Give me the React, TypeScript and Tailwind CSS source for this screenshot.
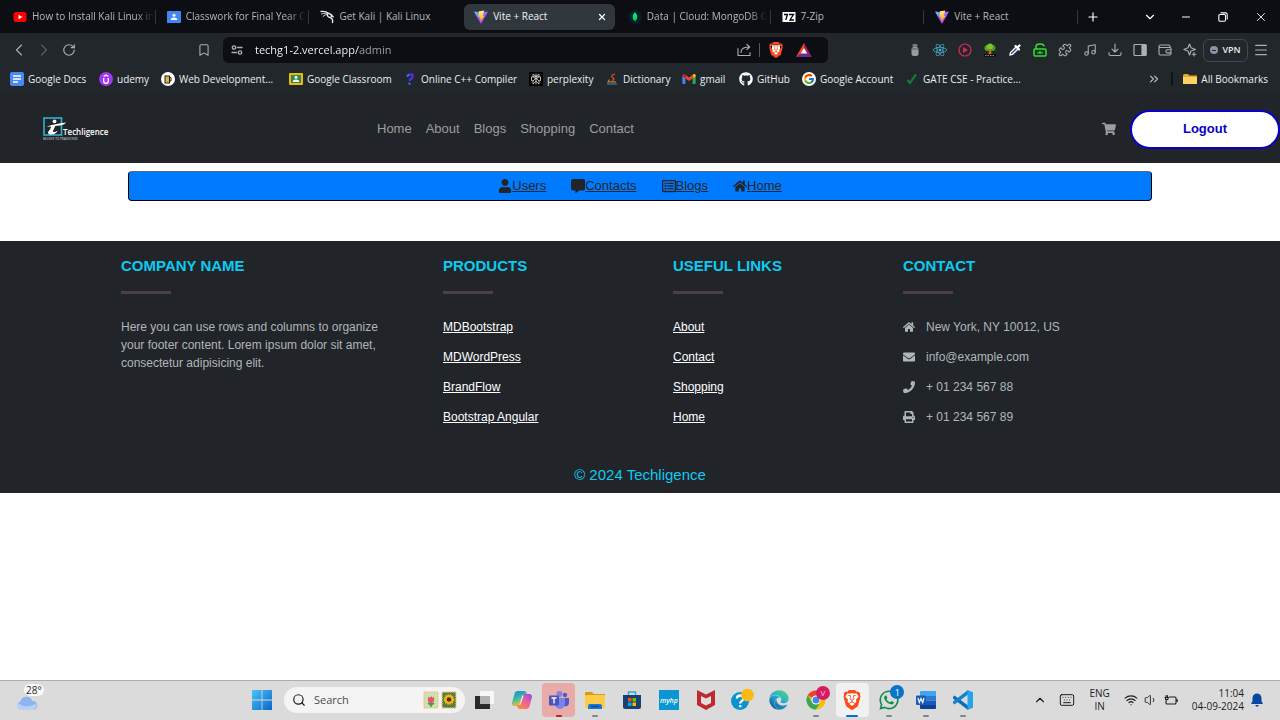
import type { ReactNode } from "react";
import {
  FaCommentAlt,
  FaEdge,
  FaEnvelope,
  FaGithub,
  FaHome,
  FaPhone,
  FaPrint,
  FaReact,
  FaRegListAlt,
  FaShoppingCart,
  FaUser,
  FaWhatsapp,
} from "react-icons/fa";
import { FcGoogle } from "react-icons/fc";
import { SiBrave, SiMongodb } from "react-icons/si";
import {
  Bookmark,
  ChevronDown,
  ChevronLeft,
  ChevronRight,
  ChevronUp,
  ChevronsRight,
  Keyboard,
  Menu,
  Minus,
  Music,
  Plus,
  Puzzle,
  RotateCw,
  Search,
  Volume1,
  Wifi,
  X,
} from "lucide-react";

/* ---------- small drawings ---------- */

function ViteIcon() {
  return (
    <svg viewBox="0 0 32 32" className="size-3.5 shrink-0">
      <defs>
        <linearGradient id="viteBody" x1="0" y1="0" x2="0.6" y2="1">
          <stop offset="0" stopColor="#41d1ff" />
          <stop offset="0.5" stopColor="#9b62ff" />
          <stop offset="1" stopColor="#bd34fe" />
        </linearGradient>
        <linearGradient id="viteBolt" x1="0" y1="0" x2="0" y2="1">
          <stop offset="0" stopColor="#ffea83" />
          <stop offset="1" stopColor="#ffa800" />
        </linearGradient>
      </defs>
      <path d="M31 5.500 17 30.300a1.200 1.200 0 0 1-2 0L1 5.500C.4 4.500 1.200 3.400 2.300 3.600L16 6l13.600-2.400c1.200-.2 2 1 1.400 1.900Z" fill="url(#viteBody)" />
      <path d="M23.500 1 11 3l-1 13 4-.7-1 5.500 2.500-.8-1.500 7.500L24 13l-4 .6L23.500 1Z" fill="url(#viteBolt)" />
    </svg>
  );
}

function YoutubeIcon() {
  return (
    <svg viewBox="0 0 26 20" className="h-2.5 w-3.5 shrink-0">
      <rect width="26" height="20" rx="5" fill="#f00" />
      <path d="m10 5.500 8 4.500-8 4.500Z" fill="#fff" />
    </svg>
  );
}

function KaliIcon() {
  return (
    <svg viewBox="0 0 28 28" className="size-3.5 shrink-0" fill="none" stroke="#e8e8e8" strokeLinecap="round">
      <path d="M2 3c6-1 12 1 16 4 4 1 6 3 8 6l-4-1" strokeWidth="2.600" />
      <path d="M3 8c5-2 9-2 13 0M6 13c3-3 6-4 9-4" strokeWidth="1.800" />
      <path d="M15 8c-1 4 1 6 5 7s6 4 5 10" strokeWidth="2.800" />
    </svg>
  );
}

function ClassroomIcon({ green = false }: { green?: boolean }) {
  return (
    <svg viewBox="0 0 28 24" className="h-3 w-3.5 shrink-0">
      <rect width="28" height="24" rx="2" fill={green ? "#f0b90b" : "#4285f4"} />
      {green && <rect x="4" y="4" width="20" height="16" fill="#2e8b4d" />}
      <circle cx="14" cy="8.500" r="3" fill="#fff" />
      <path d="M7.500 18c0-3.500 3-5 6.500-5s6.500 1.500 6.500 5Z" fill="#fff" />
    </svg>
  );
}

function SevenZipIcon() {
  return (
    <svg viewBox="0 0 26 20" className="h-2.5 w-3.5 shrink-0">
      <rect width="26" height="20" fill="#fff" />
      <path d="M3 5h7l-3.500 11M13 5h9l-7 11h8" fill="none" stroke="#000" strokeWidth="2.600" />
    </svg>
  );
}

function BraveIcon({ large = false }: { large?: boolean }) {
  return (
    <span className={large ? "grid size-5 place-items-center" : "grid size-4 place-items-center"}>
      <svg viewBox="0 0 24 24" className="size-full">
        <path d="M6 5h12v9l-6 7-6-7Z" fill="#fff" />
        <SiBrave color="#fb4a1c" size={24} />
      </svg>
    </span>
  );
}

function GmailIcon() {
  return (
    <svg viewBox="0 0 24 18" className="h-2.5 w-3.5">
      <path d="M0 2.500V16a2 2 0 0 0 2 2h3.500V7Z" fill="#4285f4" />
      <path d="M18.500 18H22a2 2 0 0 0 2-2V2.500L18.500 7Z" fill="#34a853" />
      <path d="M18.500 1.500V8L24 4V2.300C24 .2 21.500-.8 20 .3Z" fill="#fbbc04" />
      <path d="M5.500 8V1.500L12 6.300l6.500-4.800V8L12 12.800Z" fill="#ea4335" />
      <path d="M0 2.300V4l5.500 4V1.500L4 .3C2.500-.8 0 .2 0 2.300Z" fill="#c5221f" />
    </svg>
  );
}

function ChromeLogo() {
  return (
    <svg viewBox="0 0 40 40" className="size-5">
      <circle cx="20" cy="20" r="19" fill="#fbbc04" />
      <path d="M20 20 3.500 10.500A19 19 0 0 1 36.500 11L20 11Z" fill="#ea4335" />
      <path d="M3.500 10.500A19 19 0 0 0 20 39l8-14.500H12Z" fill="#34a853" />
      <circle cx="20" cy="20" r="9" fill="#fff" />
      <circle cx="20" cy="20" r="7" fill="#4285f4" />
    </svg>
  );
}

const stroke = { fill: "none", stroke: "currentColor", strokeLinecap: "round", strokeLinejoin: "round" } as const;

/* ---------- browser chrome ---------- */

type Tab = { title: string; icon: ReactNode; active?: boolean; divider?: boolean; fade?: boolean };

const tabs: Tab[] = [
  { title: "How to Install Kali Linux in", icon: <YoutubeIcon />, divider: true, fade: true },
  { title: "Classwork for Final Year C", icon: <ClassroomIcon />, divider: true, fade: true },
  { title: "Get Kali | Kali Linux", icon: <KaliIcon /> },
  { title: "Vite + React", icon: <ViteIcon />, active: true },
  {
    title: "Data | Cloud: MongoDB C",
    icon: (
      <span className="grid size-3.5 shrink-0 place-items-center rounded-full bg-[#001e2b]">
        <SiMongodb className="size-2.5 text-[#00ed64]" />
      </span>
    ),
    divider: true,
    fade: true,
  },
  { title: "7-Zip", icon: <SevenZipIcon />, divider: true },
  { title: "Vite + React", icon: <ViteIcon />, divider: true },
];

function tabTitle(tab: Tab) {
  if (tab.active) return "text-[10px] whitespace-nowrap text-[#f1f2f3]";
  if (tab.fade) return "mask-r-from-85% text-[10px] whitespace-nowrap text-[#b5b7ba]";
  return "text-[10px] whitespace-nowrap text-[#b5b7ba]";
}

function TabStrip() {
  return (
    <div className="flex h-[33px] items-center bg-[#0d0e13] text-white">
      <div role="tablist" className="grid max-w-[1079px] flex-1 grid-cols-7 pl-[3px]">
        {tabs.map((tab, i) => (
          <div key={i} className="flex min-w-0 items-center">
            <div
              className={
                tab.active
                  ? "flex h-[26px] min-w-0 flex-1 items-center rounded-md bg-[#30383e] pr-2 pl-2.5"
                  : "flex h-[26px] min-w-0 flex-1 items-center pl-2.5"
              }
            >
              <button
                role="tab"
                aria-selected={!!tab.active}
                className="flex min-w-0 flex-1 items-center gap-[5px] text-left"
              >
                {tab.icon}
                <span className={tabTitle(tab)}>{tab.title}</span>
              </button>
              {tab.active && (
                <button aria-label="Close tab">
                  <X className="size-2.5" strokeWidth={3} />
                </button>
              )}
            </div>
            <span className={tab.divider ? "mx-px h-3.5 w-px bg-[#34373d]" : "mx-px h-3.5 w-px"} />
          </div>
        ))}
      </div>
      <button aria-label="New tab" className="grid w-7 place-items-center">
        <Plus className="size-3.5" />
      </button>
      <div className="ml-auto flex items-center">
        <button aria-label="Search tabs" className="grid w-[34px] place-items-center">
          <ChevronDown className="size-3.5" />
        </button>
        <button aria-label="Minimize" className="grid w-[37px] place-items-center">
          <Minus className="size-3" />
        </button>
        <button aria-label="Restore" className="grid w-[38px] place-items-center">
          <svg viewBox="0 0 12 12" className="size-2.5" {...stroke} strokeWidth="1.300">
            <rect x="1" y="3" width="8" height="8" rx="1.500" />
            <path d="M3.500 1H9a2 2 0 0 1 2 2v5.500" />
          </svg>
        </button>
        <button aria-label="Close window" className="grid w-[38px] place-items-center">
          <X className="size-3.5" strokeWidth={1.500} />
        </button>
      </div>
    </div>
  );
}

const extensions: { name: string; icon: ReactNode }[] = [
  {
    name: "Bottle",
    icon: (
      <svg viewBox="0 0 12 14" className="h-3.5 w-3">
        <rect x="3.500" y="1" width="5" height="3" rx="1" fill="#777" />
        <rect x="2.500" y="4" width="7" height="9" rx="2.500" fill="#9c9c9c" />
        <path d="M2.500 6h7" stroke="#555" />
      </svg>
    ),
  },
  { name: "React Developer Tools", icon: <FaReact className="size-3.5 text-[#4cb8d8]" /> },
  {
    name: "Video",
    icon: (
      <svg viewBox="0 0 14 14" className="size-3.5">
        <circle cx="7" cy="7" r="6" fill="none" stroke="#d42a5b" strokeWidth="1.200" />
        <path d="m5 4 5 3-5 3Z" fill="#d42a5b" />
      </svg>
    ),
  },
  {
    name: "Tree",
    icon: (
      <svg viewBox="0 0 14 14" className="size-3.5">
        <circle cx="4.500" cy="5" r="3" fill="#5aa51e" />
        <circle cx="9.500" cy="5" r="3" fill="#4e9a1a" />
        <circle cx="7" cy="3.500" r="3" fill="#7cc62b" />
        <path d="M6 6h2l.5 5h-3Z" fill="#b5702b" />
        <path d="M1 12.500h12" stroke="#000" strokeWidth="2" />
        <path d="M2 12.500h10" stroke="#a88" strokeWidth="1" strokeDasharray="1.500 1" />
      </svg>
    ),
  },
  {
    name: "Color picker",
    icon: (
      <svg viewBox="0 0 14 14" className="size-3.5">
        <path d="m2 12 .5-2.500 6-6 2 2-6 6Z" fill="#3b4fa0" stroke="#fff" strokeWidth="1.300" />
        <path d="m7.500 3 3.500 3.500M9.500 4.500l2-2" stroke="#fff" strokeWidth="2.200" strokeLinecap="round" />
      </svg>
    ),
  },
  {
    name: "Unlock",
    icon: (
      <svg viewBox="0 0 14 14" className="size-3.5" fill="none" stroke="#2be52b" strokeWidth="1.500">
        <rect x="1" y="6" width="12" height="7" rx="1" />
        <path d="M3 6V3.500C3 1.500 4.500 1 7 1s4 .5 4 2.500M5 9v1.500M9 9v1.500M7 8v3" />
      </svg>
    ),
  },
  { name: "Extensions", icon: <Puzzle className="size-3.5" strokeWidth={1.800} /> },
  { name: "Media", icon: <Music className="size-3.5" strokeWidth={1.800} /> },
  {
    name: "Downloads",
    icon: (
      <svg viewBox="0 0 14 14" className="size-3.5" {...stroke} strokeWidth="1.100">
        <path d="M7 1v8M4 6.200 7 9l3-2.800M1 9.500V11c0 1 .5 1.500 1.500 1.500h9c1 0 1.500-.5 1.500-1.500V9.500" />
      </svg>
    ),
  },
  {
    name: "Sidebar",
    icon: (
      <svg viewBox="0 0 14 14" className="size-3.5" {...stroke} strokeWidth="1.200">
        <rect x="1" y="1.500" width="12" height="11" rx="1" />
        <rect x="9" y="2" width="4" height="10" fill="currentColor" />
      </svg>
    ),
  },
  {
    name: "Wallet",
    icon: (
      <svg viewBox="0 0 14 14" className="size-3.5" {...stroke} strokeWidth="1.100">
        <path d="M12 4.500V3.500A1.500 1.500 0 0 0 10.500 2h-8A1.500 1.500 0 0 0 1 3.500v7A1.500 1.500 0 0 0 2.500 12h9a1.500 1.500 0 0 0 1.500-1.500V5.500a1 1 0 0 0-1-1H1M13 6.700H9.500a1.600 1.600 0 0 0 0 3.200H13" />
      </svg>
    ),
  },
  {
    name: "Leo AI",
    icon: (
      <svg viewBox="0 0 14 14" className="size-3.5" {...stroke} strokeWidth="1.100">
        <path d="M6.500 1 8 4.800 12.500 6.500 8 8 6.500 12 5 8 .8 6.500 5 4.800ZM11 9.500v3.500M9.200 11.200h3.600" />
      </svg>
    ),
  },
];

function Toolbar() {
  return (
    <div className="flex h-[34px] items-center text-[#a9b0b6]">
      <nav aria-label="History" className="flex items-center pl-1.5">
        <button aria-label="Back" className="grid w-[25px] place-items-center">
          <ChevronLeft className="size-5" strokeWidth={1.300} />
        </button>
        <button aria-label="Forward" className="grid w-[25px] place-items-center text-[#5c6267]">
          <ChevronRight className="size-5" strokeWidth={1.300} />
        </button>
        <button aria-label="Reload" className="grid w-[25px] place-items-center">
          <RotateCw className="size-3.5" strokeWidth={2} />
        </button>
      </nav>
      <button aria-label="Bookmark this page" className="ml-[116px] grid w-3.5 place-items-center">
        <Bookmark className="size-3.5" strokeWidth={1.800} />
      </button>
      <div className="ml-3 flex h-[26px] max-w-[605px] flex-1 items-center rounded-md bg-[#0d0e13] pl-2">
        <svg viewBox="0 0 12 12" className="mr-1.5 size-3 shrink-0" {...stroke} strokeWidth="1.300">
          <circle cx="3" cy="3.500" r="1.700" />
          <circle cx="9" cy="8.500" r="1.700" />
          <path d="M6.500 3.500H11M1 8.500h4.500" />
        </svg>
        <input
          aria-label="Address"
          defaultValue="techg1-2.vercel.app/admin"
          className="ml-1.5 min-w-0 flex-1 bg-linear-to-r from-white from-[104px] to-[#a4a6a9] to-[104px] bg-clip-text text-[11px] text-transparent caret-white outline-none"
        />
        <button aria-label="Share" className="px-2">
          <svg viewBox="0 0 14 14" className="size-3.5" {...stroke} strokeWidth="1.100">
            <path d="M1 5.500V12.500h12V9.500M4 9.500c0-4 3-5.500 8.500-5.500M9.800 1.300 12.700 4 9.800 6.700" />
          </svg>
        </button>
        <span className="h-3.5 w-px bg-[#55585d]" />
        <button aria-label="Brave Shields" className="ml-2">
          <BraveIcon />
        </button>
        <button aria-label="Brave Rewards" className="mr-4 ml-3">
          <svg viewBox="0 0 16 14" className="h-3.5 w-4">
            <path d="M8 0 0 14l8-5Z" fill="#ff4724" />
            <path d="m8 0 8 14-8-5Z" fill="#9e1f63" />
            <path d="M0 14h16L8 8Z" fill="#662d91" />
            <path d="m8 5 3.200 5.500H4.800Z" fill="#fff" />
          </svg>
        </button>
      </div>
      <div className="ml-auto flex items-center pr-[11px]">
        {extensions.map((item) => (
          <button key={item.name} aria-label={item.name} className="grid w-[25px] place-items-center">
            {item.icon}
          </button>
        ))}
        <button className="mx-px flex h-[23px] w-[45px] items-center justify-center gap-1 rounded-md border border-[#42484d] text-[9px] font-semibold text-[#e8eaec]">
          <span className="grid size-2 place-items-center rounded-full bg-[#8e92a4]">
            <span className="h-px w-1 bg-[#22272b]" />
          </span>
          VPN
        </button>
        <button aria-label="Menu" className="ml-1">
          <Menu className="size-4" strokeWidth={1.800} />
        </button>
      </div>
    </div>
  );
}

const bookmarks: { label: string; width: string; icon: ReactNode }[] = [
  {
    label: "Google Docs",
    width: "w-[89px]",
    icon: (
      <svg viewBox="0 0 14 14" className="size-3.5">
        <rect width="14" height="14" rx="2" fill="#4a8af4" />
        <path d="M3 4h8M3 7h8M3 10h5" stroke="#fff" strokeWidth="1.300" />
      </svg>
    ),
  },
  {
    label: "udemy",
    width: "w-[62px]",
    icon: (
      <svg viewBox="0 0 14 14" className="size-3.5">
        <circle cx="7" cy="7" r="7" fill="#a435f0" />
        <path d="M4.700 6v3c0 3 4.600 3 4.600 0V6M4.700 4.500 7 3l2.300 1.500" stroke="#fff" strokeWidth="1.300" fill="none" />
      </svg>
    ),
  },
  {
    label: "Web Development...",
    width: "w-[128px]",
    icon: (
      <svg viewBox="0 0 14 14" className="size-3.5">
        <circle cx="7" cy="7" r="7" fill="#fff" />
        <rect x="4" y="4" width="4.500" height="7" fill="#e8b330" stroke="#222" />
        <path d="M8.500 5.500h1.500v3.500H8.500" stroke="#222" fill="none" />
      </svg>
    ),
  },
  { label: "Google Classroom", width: "w-[114px]", icon: <ClassroomIcon green /> },
  {
    label: "Online C++ Compiler",
    width: "w-[126px]",
    icon: (
      <svg viewBox="0 0 14 14" className="size-3.5">
        <path d="M4 4.500 6 2.500h3.500v3L7 7.500v1.500" fill="none" stroke="#5b2bea" strokeWidth="2.200" />
        <path d="M4 4.500 6 2.500" stroke="#1c7bff" strokeWidth="2" />
        <path d="m5.500 11 2 1.500" stroke="#2f6bff" strokeWidth="2" />
      </svg>
    ),
  },
  {
    label: "perplexity",
    width: "w-[76px]",
    icon: (
      <svg viewBox="0 0 14 14" className="size-3.5" fill="none" stroke="#e6e6e6" strokeWidth="0.800">
        <rect width="14" height="14" fill="#000" stroke="none" />
        <path d="M7 1.500v11M4 2v2.500L7 7l3-2.500V2L7 4.500ZM2.500 4.800h9v4H10L7 6.500 4 8.800H2.500ZM4 8.800V12l3-2.800L10 12V8.800" />
      </svg>
    ),
  },
  {
    label: "Dictionary",
    width: "w-[77px]",
    icon: (
      <svg viewBox="0 0 14 14" className="size-3.5" fill="none" strokeWidth="1.200">
        <path d="M10 2C6.500 3 5.500 4.500 8 6c1.500 1 1 2-1 2.500" stroke="#e2572b" />
        <path d="M4.500 7.500 3 9.800h8" stroke="#c77a3a" />
        <path d="M2 12h10" stroke="#3b86a5" />
      </svg>
    ),
  },
  { label: "gmail", width: "w-[57px]", icon: <GmailIcon /> },
  { label: "GitHub", width: "w-[63px]", icon: <FaGithub className="size-3.5 text-white" /> },
  {
    label: "Google Account",
    width: "w-[103px]",
    icon: (
      <span className="grid size-3.5 place-items-center rounded-full bg-white">
        <FcGoogle className="size-3" />
      </span>
    ),
  },
  {
    label: "GATE CSE - Practice...",
    width: "w-[114px]",
    icon: (
      <svg viewBox="0 0 14 14" className="size-3.5">
        <path d="M2.500 8 5 11 11 2.500" fill="none" stroke="#0b7a3b" strokeWidth="2.200" />
      </svg>
    ),
  },
];

function BookmarksBar() {
  return (
    <nav aria-label="Bookmarks" className="flex h-[26px] items-center pr-3 pb-0.5 pl-2.5 text-[10px] text-[#eceef0]">
      {bookmarks.map((item) => (
        <a key={item.label} href="#" className={`flex items-center gap-1 whitespace-nowrap ${item.width}`}>
          <span className="shrink-0">{item.icon}</span>
          {item.label}
        </a>
      ))}
      <div className="ml-auto flex items-center">
        <button aria-label="More bookmarks" className="text-[#b9bec3]">
          <ChevronsRight className="size-3.5" />
        </button>
        <span className="mx-2.5 h-3.5 w-0.5 bg-[#101317]" />
        <a href="#" className="flex items-center gap-1 whitespace-nowrap">
          <svg viewBox="0 0 14 12" className="h-3 w-3.5">
            <path d="M0 2.500A1.500 1.500 0 0 1 1.500 1H5l1.500 1.500H14V11H0Z" fill="#e0a92a" />
            <path d="M0 4h14v7H0Z" fill="#fdd262" />
          </svg>
          All Bookmarks
        </a>
      </div>
    </nav>
  );
}

/* ---------- web page ---------- */

function Logo() {
  return (
    <svg viewBox="0 0 68 24" className="h-6 w-[68px]" aria-label="Techligence">
      <rect x="1" y="1" width="17.500" height="17" fill="none" stroke="#2bb5cf" strokeWidth="1.600" />
      <circle cx="11.500" cy="4.300" r="1.900" fill="#fff" />
      <path d="M3.500 9.800C9 7.500 15 6.500 23 5.500 21 8.300 16 8.600 12.300 9L10 14c-.5 1.500 2 1.500 4.500-.2-1 3-4.500 4.200-7.500 3.600-3-.8-2-3 0-5l1.200-2.900Z" fill="#fff" />
      <text x="20" y="18" fill="#fff" fontFamily="'Open Sans', sans-serif" fontSize="8" fontWeight="600">
        Techligence
      </text>
      <text x="0" y="23" fill="#b5b7b9" fontFamily="'Open Sans', sans-serif" fontSize="3" fontWeight="600">
        BELIEVE TO TRANSCEND
      </text>
    </svg>
  );
}

function Navbar() {
  return (
    <header className="flex h-[70px] items-center bg-[#212529] pt-0.5">
      <a href="#" className="ml-[43px]">
        <Logo />
      </a>
      <nav className="ml-[266px] flex gap-3.5 text-[13px] text-[#9b9d9f]">
        {["Home", "About", "Blogs", "Shopping", "Contact"].map((label) => (
          <a key={label} href="#">
            {label}
          </a>
        ))}
      </nav>
      <a href="#" aria-label="Cart" className="mr-3.5 ml-auto text-[#9b9d9f]">
        <FaShoppingCart className="size-3.5" />
      </a>
      <button className="h-[39px] w-[150px] rounded-full border-2 border-[#0b00c8] bg-white text-[13px] font-bold text-[#0b00c8]">
        Logout
      </button>
    </header>
  );
}

const adminLinks = [
  { label: "Users", Icon: FaUser },
  { label: "Contacts", Icon: FaCommentAlt },
  { label: "Blogs", Icon: FaRegListAlt },
  { label: "Home", Icon: FaHome },
];

function AdminBar() {
  return (
    <nav className="mx-auto mt-2 mb-10 flex h-[30px] w-4/5 items-center justify-center gap-[25px] rounded border border-t-[#4a6d94] border-r-black border-b-black border-l-black bg-[#007bff] text-[13px] text-[#212529]">
      {adminLinks.map(({ label, Icon }) => (
        <a key={label} href="#" className="flex items-center">
          <Icon className="size-3.5" />
          <span className="underline">{label}</span>
        </a>
      ))}
    </nav>
  );
}

function FooterColumn({ title, children }: { title: string; children: ReactNode }) {
  return (
    <section>
      <h2 className="text-[15px] leading-[18px] font-bold text-[#0dcaf0] uppercase">{title}</h2>
      <hr className="mt-4 mb-6 h-[3px] w-[50px] border-0 bg-[#4f3f44]" />
      {children}
    </section>
  );
}

function LinkList({ items }: { items: string[] }) {
  return (
    <ul className="flex flex-col gap-3 text-white">
      {items.map((item) => (
        <li key={item}>
          <a href="#" className="underline">
            {item}
          </a>
        </li>
      ))}
    </ul>
  );
}

const contacts = [
  { text: "New York, NY 10012, US", Icon: FaHome },
  { text: "info@example.com", Icon: FaEnvelope },
  { text: "+ 01 234 567 88", Icon: FaPhone },
  { text: "+ 01 234 567 89", Icon: FaPrint },
];

function Footer() {
  return (
    <footer className="bg-[#212529] pt-4 pb-2">
      <div className="mx-auto grid w-fit grid-cols-[322px_230px_230px_256px] text-[12px] leading-[18px] text-[#b0b5ba]">
        <FooterColumn title="Company name">
          <p className="max-w-[270px]">
            Here you can use rows and columns to organize your footer content. Lorem ipsum dolor sit amet, consectetur
            adipisicing elit.
          </p>
        </FooterColumn>
        <FooterColumn title="Products">
          <LinkList items={["MDBootstrap", "MDWordPress", "BrandFlow", "Bootstrap Angular"]} />
        </FooterColumn>
        <FooterColumn title="Useful links">
          <LinkList items={["About", "Contact", "Shopping", "Home"]} />
        </FooterColumn>
        <FooterColumn title="Contact">
          <ul className="flex flex-col gap-3">
            {contacts.map(({ text, Icon }) => (
              <li key={text} className="flex items-center gap-[11px]">
                <Icon className="size-3" />
                {text}
              </li>
            ))}
          </ul>
        </FooterColumn>
      </div>
      <p className="mt-[39px] text-center text-[15px] leading-5 text-[#0dcaf0]">© 2024 Techligence</p>
    </footer>
  );
}

/* ---------- desktop taskbar ---------- */

type TaskApp = { name: string; icon: ReactNode; running?: boolean; tile?: "red" | "light" };

const apps: TaskApp[] = [
  {
    name: "Task view",
    icon: (
      <svg viewBox="0 0 20 20" className="size-5">
        <rect x="5" y="1" width="14" height="13" rx="1" fill="#f7f7f7" />
        <path d="M0 6h5v8h10v5H0Z" fill="#2b2b2b" />
        <rect x="5" y="6" width="10" height="8" fill="#b3b3b3" />
      </svg>
    ),
  },
  {
    name: "Copilot",
    icon: (
      <svg viewBox="0 0 20 20" className="size-5">
        <defs>
          <linearGradient id="copA" x1="0" y1="0" x2="0.4" y2="1">
            <stop offset="0" stopColor="#1b7fe0" />
            <stop offset="0.5" stopColor="#33b8b0" />
            <stop offset="1" stopColor="#f2c32c" />
          </linearGradient>
          <linearGradient id="copB" x1="1" y1="0" x2="0.3" y2="1">
            <stop offset="0" stopColor="#8a4be8" />
            <stop offset="0.5" stopColor="#ee5c9c" />
            <stop offset="1" stopColor="#f58a4a" />
          </linearGradient>
        </defs>
        <path d="M6 1h6c2 0 2.500 1.500 3 4h-3L9 14c-.5 1.500-1 2-2.500 2H3c-3 0-3.500-2-2.500-5L2.500 4C3 2 4 1 6 1Z" fill="url(#copA)" />
        <path d="M14 19H8c-2 0-2.500-1.500-3-4h3l3-9c.5-1.500 1-2 2.500-2H17c3 0 3.500 2 2.500 5l-2 7c-.5 2-1.500 3-3.500 3Z" fill="url(#copB)" />
        <path d="m11.500 6-3 8.500h-1L10.500 5Z" fill="#eef3fb" />
      </svg>
    ),
  },
  {
    name: "Teams",
    running: true,
    tile: "red",
    icon: (
      <svg viewBox="0 0 20 20" className="size-5">
        <circle cx="16" cy="5" r="2.200" fill="#5059c9" />
        <path d="M13 8h7v5a3.500 3.500 0 0 1-5 3Z" fill="#5059c9" />
        <circle cx="10.500" cy="4" r="3" fill="#7b83eb" />
        <path d="M6 8h10v6a5 5 0 0 1-10 0Z" fill="#7b83eb" />
        <rect y="5.500" width="10" height="10" rx="1" fill="#4b53bc" />
        <path d="M2.500 8h5M5 8v5.500" stroke="#fff" strokeWidth="1.400" />
      </svg>
    ),
  },
  {
    name: "File Explorer",
    running: true,
    icon: (
      <svg viewBox="0 0 20 20" className="size-5">
        <path d="M0 3a1 1 0 0 1 1-1h6l2 2h10a1 1 0 0 1 1 1v4H0Z" fill="#d99a1c" />
        <rect y="5" width="20" height="13" rx="1" fill="#fccb47" />
        <path d="M3 19v-3a2 2 0 0 1 2-2h10a2 2 0 0 1 2 2v3Z" fill="#1976d2" />
        <path d="M6 16.500h8" stroke="#0b4a94" strokeWidth="1.500" />
      </svg>
    ),
  },
  {
    name: "Microsoft Store",
    icon: (
      <svg viewBox="0 0 20 20" className="size-5">
        <path d="M6.500 5V2h7v3" fill="none" stroke="#39a3dc" strokeWidth="1.500" />
        <path d="M1 5h18v12a2 2 0 0 1-2 2H3a2 2 0 0 1-2-2Z" fill="#17416f" />
        <path d="M6 8h3.500v3.500H6Z" fill="#f25022" />
        <path d="M10.500 8H14v3.500h-3.500Z" fill="#7fba00" />
        <path d="M6 12.500h3.500V16H6Z" fill="#00a4ef" />
        <path d="M10.500 12.500H14V16h-3.500Z" fill="#ffb900" />
      </svg>
    ),
  },
  {
    name: "myHP",
    icon: (
      <span className="grid size-5 place-items-center bg-[#0a96d1] text-[7px] leading-none font-semibold text-white italic">
        myhp
      </span>
    ),
  },
  {
    name: "McAfee",
    icon: (
      <svg viewBox="0 0 20 20" className="size-5">
        <path d="M1 0 10 4.500 19 0v15l-9 5-9-5Z" fill="#bf2a30" />
        <path d="m5 6 5 2.500L15 6v7l-5 2.500L5 13Z" fill="#dedede" />
      </svg>
    ),
  },
  {
    name: "Get Help",
    icon: (
      <svg viewBox="0 0 24 22" className="h-[22px] w-6">
        <circle cx="10" cy="12" r="9" fill="#0a93cf" />
        <path d="M7 9.500c0-4 6.500-4 6.500 0 0 2.500-3.300 2.300-3.300 5M10.200 16v2.300" fill="none" stroke="#fff" strokeWidth="2.400" />
        <circle cx="17.500" cy="6" r="6.300" fill="#fdb913" />
      </svg>
    ),
  },
  {
    name: "Edge",
    icon: (
      <svg viewBox="0 0 20 20" className="size-5">
        <defs>
          <linearGradient id="edge" x1="0.900" y1="0" x2="0.200" y2="1">
            <stop offset="0" stopColor="#5bd75a" />
            <stop offset="0.400" stopColor="#2bb6cf" />
            <stop offset="1" stopColor="#0c59a4" />
          </linearGradient>
        </defs>
        <FaEdge size={20} fill="url(#edge)" />
      </svg>
    ),
  },
  {
    name: "Chrome",
    running: true,
    icon: (
      <span className="relative">
        <ChromeLogo />
        <span className="absolute -top-1 -right-1 grid size-3.5 place-items-center rounded-full bg-[#d81b60] text-[8px] leading-none text-[#f6c5d8]">
          V
        </span>
      </span>
    ),
  },
  { name: "Brave", running: true, tile: "light", icon: <BraveIcon large /> },
  {
    name: "WhatsApp",
    running: true,
    icon: (
      <span className="relative">
        <FaWhatsapp className="size-[22px] text-[#128c4a]" />
        <span className="absolute -top-1 -right-1 grid size-3.5 place-items-center rounded-full bg-[#0a74c9] text-[9px] leading-none text-white">
          1
        </span>
      </span>
    ),
  },
  {
    name: "Word",
    running: true,
    icon: (
      <svg viewBox="0 0 20 20" className="size-5">
        <path d="M5 1h14a1 1 0 0 1 1 1v4H4V2a1 1 0 0 1 1-1Z" fill="#41a5ee" />
        <path d="M4 6h16v4.500H4Z" fill="#2b7cd3" />
        <path d="M4 10.500h16V15H4Z" fill="#185abd" />
        <path d="M4 15h16v3a1 1 0 0 1-1 1H5a1 1 0 0 1-1-1Z" fill="#103f91" />
        <rect y="5.500" width="10" height="9.500" rx="1" fill="#185abd" />
        <path d="m2 8 1.300 4.500L5 8.500l1.700 4L8 8" fill="none" stroke="#fff" strokeWidth="1.200" />
      </svg>
    ),
  },
  {
    name: "Visual Studio Code",
    running: true,
    icon: (
      <svg viewBox="0 0 20 20" className="size-5">
        <path d="m0 7 1.500-1.500L15 15.500V20L0 8.500Z" fill="#0b6db5" />
        <path d="m0 13 1.500 1.500L15 4.500V0L0 11.500Z" fill="#1582cc" />
        <path d="m14.500 0 5.500 2.300v15.400L14.500 20Z" fill="#25a3ee" />
      </svg>
    ),
  },
];

function runningMark(app: TaskApp) {
  if (!app.running) return "h-0.5 w-1.5";
  if (app.tile === "red") return "h-0.5 w-1.5 rounded-full bg-[#b3261e]";
  if (app.tile === "light") return "h-0.5 w-3 rounded-full bg-[#0a6cc4]";
  return "h-0.5 w-1.5 rounded-full bg-[#858585]";
}

function appTile(app: TaskApp) {
  const base = "flex h-[34px] w-[33px] flex-col items-center justify-end gap-0.5";
  if (app.tile === "red") return `${base} rounded bg-[#e9aba7]`;
  if (app.tile === "light") return `${base} rounded bg-[#f1f1f1]`;
  return base;
}

function Taskbar() {
  return (
    <div className="flex h-10 items-center border-t border-[#adadad] bg-[#dbdbdb] pb-px text-[10px] text-[#1d1d1d]">
      <button aria-label="Weather" className="relative ml-4 h-7 w-8">
        <svg viewBox="0 0 24 20" className="mt-1 h-[18px] w-[22px]">
          <path d="M5 19a5 5 0 0 1-.5-9.500A7 7 0 0 1 18 9a5 5 0 0 1 1 10Z" fill="#8fb5ee" />
          <path d="M5 19a5 5 0 0 1-3-8c6 5 13 5 20 1a5 5 0 0 1-3 7Z" fill="#b9d0f6" />
        </svg>
        <span className="absolute -top-0.5 left-2 rounded-full bg-[#fafafa] px-0.5 text-[10px] leading-3">28°</span>
      </button>
      <button aria-label="Start" className="ml-[204px]">
        <svg viewBox="0 0 20 20" className="size-5">
          <defs>
            <linearGradient id="start" x1="0" y1="0" x2="1" y2="1">
              <stop offset="0" stopColor="#4cc3f5" />
              <stop offset="1" stopColor="#0a66c8" />
            </linearGradient>
          </defs>
          <path d="M0 0h9.600v9.600H0ZM10.400 0H20v9.600h-9.600ZM0 10.400h9.600V20H0ZM10.400 10.400H20V20h-9.600Z" fill="url(#start)" />
        </svg>
      </button>
      <label className="ml-3 flex h-[26px] w-[181px] items-center rounded-full bg-[#f4f4f4] px-2">
        <Search className="size-3.5 shrink-0" />
        <input
          aria-label="Search"
          placeholder="Search"
          className="ml-2 w-full min-w-0 bg-transparent text-[11px] outline-none placeholder:text-[#4c4c4c]"
        />
        <svg viewBox="0 0 34 18" className="h-[18px] w-[34px] shrink-0">
          <rect x="1" y="1" width="14" height="16" fill="#cfe0b0" stroke="#eac48a" strokeWidth="1.500" strokeDasharray="1.500 1" />
          <path d="M8 10v6M8 14l-3-2M8 14l3-2" stroke="#4f9a3d" strokeWidth="1.600" />
          <path d="M5 5.500 6.500 7 8 5l1.500 2L11 5.500V9a3 3 0 0 1-6 0Z" fill="#e8506f" />
          <rect x="19" y="1" width="14" height="16" fill="#55803a" stroke="#eac48a" strokeWidth="1.500" strokeDasharray="1.500 1" />
          <circle cx="26" cy="8.500" r="4.300" fill="#f7b51b" stroke="#f7b51b" strokeWidth="2" strokeDasharray="1.500 0.800" />
          <circle cx="26" cy="8.500" r="2.300" fill="#5a2a0c" />
        </svg>
      </label>
      <div className="ml-0.5 grid w-[514px] grid-cols-14">
        {apps.map((app) => (
          <button key={app.name} aria-label={app.name} className="flex justify-center">
            <span className={appTile(app)}>
              <span className="grid flex-1 place-items-center pt-1">{app.icon}</span>
              <span className={runningMark(app)} />
            </span>
          </button>
        ))}
      </div>
      <div className="mr-4 ml-auto flex items-center">
        <button aria-label="Show hidden icons">
          <ChevronUp className="size-3.5" />
        </button>
        <Keyboard className="ml-3 size-4" strokeWidth={1.500} />
        <button className="ml-3.5 text-center leading-[13px]">
          ENG
          <br />
          IN
        </button>
        <div className="ml-3.5 flex items-center gap-1.5">
          <Wifi className="size-3.5" />
          <Volume1 className="size-3.5" strokeWidth={1.500} />
          <svg viewBox="0 0 14 12" className="h-3 w-3.5" {...stroke} strokeWidth="1.100">
            <path d="M5.500 3H11a1 1 0 0 1 1 1v5a1 1 0 0 1-1 1H3a1 1 0 0 1-1-1V6.500M13.200 5.500v2M1 3.500h3.500M1.500 3.500V5c0 1 2.500 1 2.500 0V3.500M2 3V1.500M3.500 3V1.500" />
          </svg>
        </div>
        <button className="ml-3.5 text-right leading-[13px]">
          11:04
          <br />
          04-09-2024
        </button>
        <svg viewBox="0 0 14 14" className="ml-1.5 size-3.5" aria-label="Notifications">
          <path d="M7 .5a4.500 4.500 0 0 1 4.500 4.500v3l1.500 3H1l1.500-3V5A4.500 4.500 0 0 1 7 .5ZM5.300 12h3.400a1.700 1.700 0 0 1-3.400 0Z" fill="#0a47a0" />
        </svg>
      </div>
    </div>
  );
}

export default function App() {
  return (
    <div className="flex min-h-screen flex-col bg-white font-['Open_Sans','Noto_Sans',sans-serif]">
      <div className="bg-[#22272b]">
        <TabStrip />
        <Toolbar />
        <BookmarksBar />
      </div>
      <main className="flex-1 font-['Liberation_Sans',Arial,sans-serif]">
        <Navbar />
        <AdminBar />
        <Footer />
      </main>
      <Taskbar />
    </div>
  );
}
